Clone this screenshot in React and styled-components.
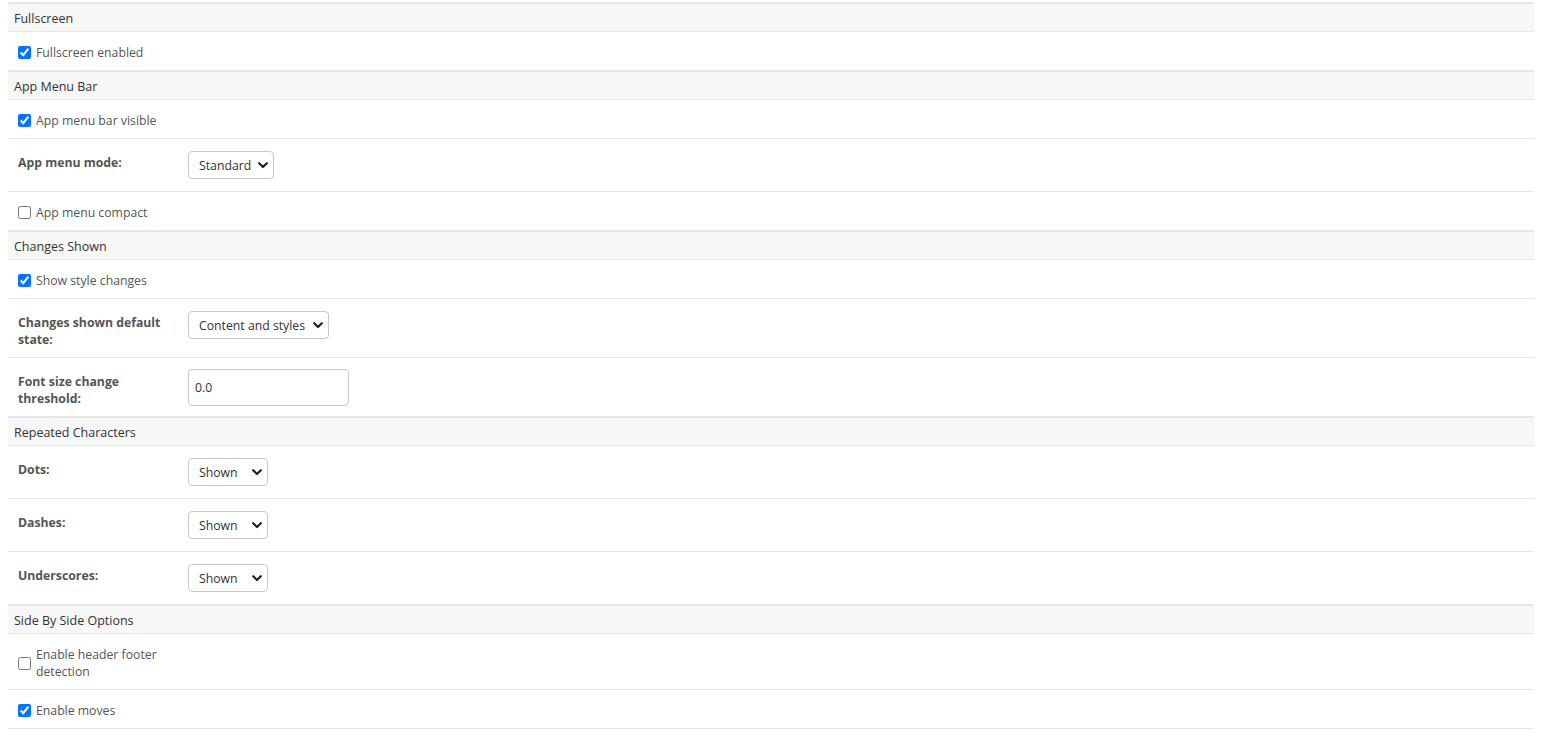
import React, { useState } from 'react';
import styled, { createGlobalStyle } from 'styled-components';

const GlobalStyle = createGlobalStyle`
  html, body {
    margin: 0;
    padding: 0;
    background: #fff;
  }
  body {
    font-family: "Open Sans", "Noto Sans", sans-serif;
    font-size: 12.25px;
    color: #555;
  }
`;

const Page = styled.div`
  padding: 2px 14px 0 8px;
`;

const Panel = styled.div`
  border-top: 1px solid #e6e6e6;
`;

const SectionHeader = styled.div`
  background: #f7f7f7;
  border-top: 1px solid #e6e6e6;
  border-bottom: 1px solid #e6e6e6;
  padding: 6px 6px 4px;
  line-height: 17px;
  font-size: 12.5px;
  color: #333;
`;

const Row = styled.div`
  display: flex;
  align-items: flex-start;
  padding: ${(p) => p.$pad || '12px 10px 9px'};
  border-bottom: 1px solid #e6e6e6;
`;

const CheckLabel = styled.label`
  display: flex;
  align-items: center;
  gap: 5px;
  width: 152px;
  line-height: 17px;
  font-size: 12.25px;
  color: #555;
  cursor: pointer;
`;

const Check = styled.input.attrs({ type: 'checkbox' })`
  margin: 0;
  width: 13px;
  height: 13px;
  flex: 0 0 13px;
  accent-color: #0075ff;
`;

const FieldLabel = styled.div`
  width: 150px;
  margin-right: 20px;
  margin-bottom: -3px;
  padding-top: ${(p) => p.$top || '3px'};
  font-weight: 700;
  font-size: 12.25px;
  line-height: 17px;
  color: #555;
`;

const SelectWrap = styled.div`
  position: relative;
  display: inline-block;
`;

const Select = styled.select`
  appearance: none;
  -webkit-appearance: none;
  height: 28px;
  width: ${(p) => p.$w}px;
  padding: 0 20px 0 10px;
  border: 1px solid #c8c8c8;
  border-radius: 4px;
  background: #fff;
  font-family: inherit;
  font-size: 12.25px;
  color: #333;
`;

const Chevron = styled.svg`
  position: absolute;
  right: 6px;
  top: 50%;
  margin-top: -3px;
  pointer-events: none;
`;

const TextInput = styled.input`
  box-sizing: border-box;
  width: 161px;
  height: 37px;
  padding: 0 6px;
  border: 1px solid #c8c8c8;
  border-radius: 4px;
  font-family: inherit;
  font-size: 12.25px;
  color: #333;
`;

const Dropdown = ({ value, options, width }) => {
  const [v, setV] = useState(value);
  return (
    <SelectWrap>
      <Select $w={width} value={v} onChange={(e) => setV(e.target.value)}>
        {options.map((o) => (
          <option key={o}>{o}</option>
        ))}
      </Select>
      <Chevron width="10" height="7" viewBox="0 0 10 7">
        <path d="M1.2 1.2 L5 5 L8.8 1.2" fill="none" stroke="#222" strokeWidth="2.2" strokeLinecap="round" strokeLinejoin="round" />
      </Chevron>
    </SelectWrap>
  );
};

const CheckRow = ({ label, checked }) => (
  <Row>
    <CheckLabel>
      <Check defaultChecked={checked} />
      <span>{label}</span>
    </CheckLabel>
  </Row>
);

const SelectRow = ({ label, value, options, width }) => (
  <Row $pad="12px 10px">
    <FieldLabel>{label}</FieldLabel>
    <Dropdown value={value} options={options} width={width} />
  </Row>
);

const shownOptions = ['Shown', 'Hidden'];

export default function App() {
  return (
    <Page>
      <GlobalStyle />
      <Panel>
        <SectionHeader>Fullscreen</SectionHeader>
        <CheckRow label="Fullscreen enabled" checked />

        <SectionHeader>App Menu Bar</SectionHeader>
        <CheckRow label="App menu bar visible" checked />
        <SelectRow label="App menu mode:" value="Standard" options={['Standard', 'Simplified']} width={86} />
        <CheckRow label="App menu compact" />

        <SectionHeader>Changes Shown</SectionHeader>
        <CheckRow label="Show style changes" checked />
        <SelectRow
          label="Changes shown default state:"
          value="Content and styles"
          options={['Content and styles', 'Content only', 'None']}
          width={141}
        />
        <Row $pad="11px 10px 10px">
          <FieldLabel $top="4px">Font size change threshold:</FieldLabel>
          <TextInput defaultValue="0.0" />
        </Row>

        <SectionHeader>Repeated Characters</SectionHeader>
        <SelectRow label="Dots:" value="Shown" options={shownOptions} width={80} />
        <SelectRow label="Dashes:" value="Shown" options={shownOptions} width={80} />
        <SelectRow label="Underscores:" value="Shown" options={shownOptions} width={80} />

        <SectionHeader>Side By Side Options</SectionHeader>
        <CheckRow label="Enable header footer detection" />
        <CheckRow label="Enable moves" checked />
      </Panel>
    </Page>
  );
}
